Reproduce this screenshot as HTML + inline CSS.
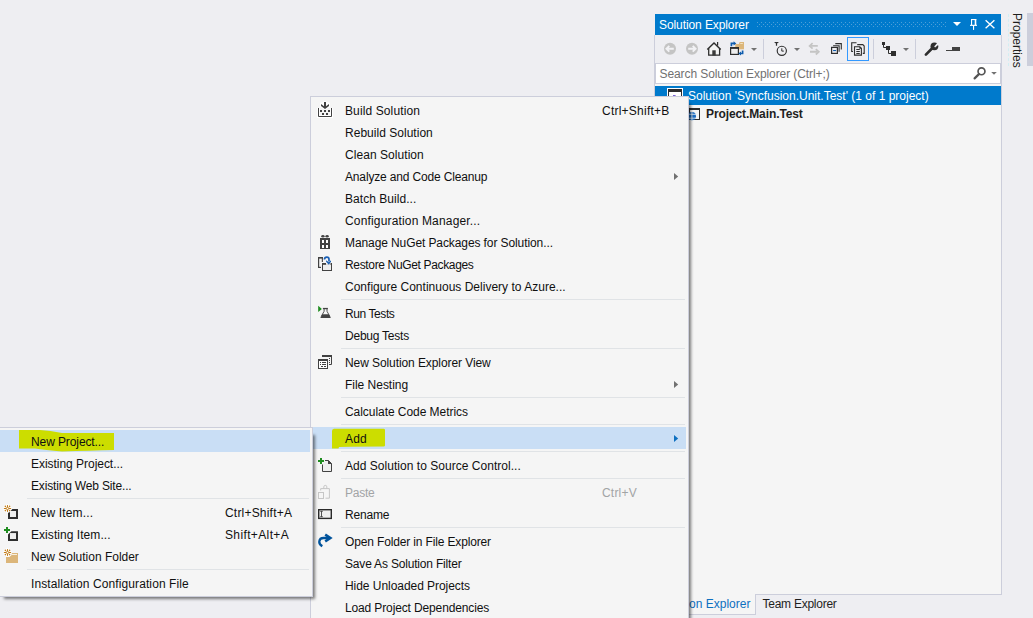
<!DOCTYPE html>
<html><head><meta charset="utf-8"><title>VS</title>
<style>
*{box-sizing:border-box}
html,body{margin:0;padding:0}
body{width:1033px;height:618px;overflow:hidden;position:relative;background:#EEEEF2;font-family:'Liberation Sans', sans-serif;font-size:12px;color:#1E1E1E}
.abs{position:absolute}
.t{position:absolute;white-space:nowrap;line-height:22px;height:22px}
svg{position:absolute;overflow:visible}
</style></head><body>
<div class="abs" style="left:654px;top:35px;width:348px;height:560px;border:1px solid #CCCEDB;border-top:none;border-bottom:none;background:#F5F5F5"></div><div class="abs" style="left:755px;top:594px;width:247px;height:1px;background:#CCCEDB"></div><div class="abs" style="left:655px;top:35px;width:346px;height:28px;background:#EEEEF2"></div><div class="abs" style="left:655px;top:14px;width:346px;height:21px;background:#007ACC"></div><div class="t" style="left:659px;top:14px;color:#FFFFFF;letter-spacing:-0.09px">Solution Explorer</div><svg style="left:0;top:0" width="1033" height="618"><g fill="#4D9FD9"><rect x="757" y="22" width="1" height="1"/><rect x="761" y="22" width="1" height="1"/><rect x="765" y="22" width="1" height="1"/><rect x="769" y="22" width="1" height="1"/><rect x="773" y="22" width="1" height="1"/><rect x="777" y="22" width="1" height="1"/><rect x="781" y="22" width="1" height="1"/><rect x="785" y="22" width="1" height="1"/><rect x="789" y="22" width="1" height="1"/><rect x="793" y="22" width="1" height="1"/><rect x="797" y="22" width="1" height="1"/><rect x="801" y="22" width="1" height="1"/><rect x="805" y="22" width="1" height="1"/><rect x="809" y="22" width="1" height="1"/><rect x="813" y="22" width="1" height="1"/><rect x="817" y="22" width="1" height="1"/><rect x="821" y="22" width="1" height="1"/><rect x="825" y="22" width="1" height="1"/><rect x="829" y="22" width="1" height="1"/><rect x="833" y="22" width="1" height="1"/><rect x="837" y="22" width="1" height="1"/><rect x="841" y="22" width="1" height="1"/><rect x="845" y="22" width="1" height="1"/><rect x="849" y="22" width="1" height="1"/><rect x="853" y="22" width="1" height="1"/><rect x="857" y="22" width="1" height="1"/><rect x="861" y="22" width="1" height="1"/><rect x="865" y="22" width="1" height="1"/><rect x="869" y="22" width="1" height="1"/><rect x="873" y="22" width="1" height="1"/><rect x="877" y="22" width="1" height="1"/><rect x="881" y="22" width="1" height="1"/><rect x="885" y="22" width="1" height="1"/><rect x="889" y="22" width="1" height="1"/><rect x="893" y="22" width="1" height="1"/><rect x="897" y="22" width="1" height="1"/><rect x="901" y="22" width="1" height="1"/><rect x="905" y="22" width="1" height="1"/><rect x="909" y="22" width="1" height="1"/><rect x="913" y="22" width="1" height="1"/><rect x="917" y="22" width="1" height="1"/><rect x="921" y="22" width="1" height="1"/><rect x="925" y="22" width="1" height="1"/><rect x="929" y="22" width="1" height="1"/><rect x="933" y="22" width="1" height="1"/><rect x="937" y="22" width="1" height="1"/><rect x="941" y="22" width="1" height="1"/><rect x="945" y="22" width="1" height="1"/><rect x="759" y="24" width="1" height="1"/><rect x="763" y="24" width="1" height="1"/><rect x="767" y="24" width="1" height="1"/><rect x="771" y="24" width="1" height="1"/><rect x="775" y="24" width="1" height="1"/><rect x="779" y="24" width="1" height="1"/><rect x="783" y="24" width="1" height="1"/><rect x="787" y="24" width="1" height="1"/><rect x="791" y="24" width="1" height="1"/><rect x="795" y="24" width="1" height="1"/><rect x="799" y="24" width="1" height="1"/><rect x="803" y="24" width="1" height="1"/><rect x="807" y="24" width="1" height="1"/><rect x="811" y="24" width="1" height="1"/><rect x="815" y="24" width="1" height="1"/><rect x="819" y="24" width="1" height="1"/><rect x="823" y="24" width="1" height="1"/><rect x="827" y="24" width="1" height="1"/><rect x="831" y="24" width="1" height="1"/><rect x="835" y="24" width="1" height="1"/><rect x="839" y="24" width="1" height="1"/><rect x="843" y="24" width="1" height="1"/><rect x="847" y="24" width="1" height="1"/><rect x="851" y="24" width="1" height="1"/><rect x="855" y="24" width="1" height="1"/><rect x="859" y="24" width="1" height="1"/><rect x="863" y="24" width="1" height="1"/><rect x="867" y="24" width="1" height="1"/><rect x="871" y="24" width="1" height="1"/><rect x="875" y="24" width="1" height="1"/><rect x="879" y="24" width="1" height="1"/><rect x="883" y="24" width="1" height="1"/><rect x="887" y="24" width="1" height="1"/><rect x="891" y="24" width="1" height="1"/><rect x="895" y="24" width="1" height="1"/><rect x="899" y="24" width="1" height="1"/><rect x="903" y="24" width="1" height="1"/><rect x="907" y="24" width="1" height="1"/><rect x="911" y="24" width="1" height="1"/><rect x="915" y="24" width="1" height="1"/><rect x="919" y="24" width="1" height="1"/><rect x="923" y="24" width="1" height="1"/><rect x="927" y="24" width="1" height="1"/><rect x="931" y="24" width="1" height="1"/><rect x="935" y="24" width="1" height="1"/><rect x="939" y="24" width="1" height="1"/><rect x="943" y="24" width="1" height="1"/><rect x="757" y="26" width="1" height="1"/><rect x="761" y="26" width="1" height="1"/><rect x="765" y="26" width="1" height="1"/><rect x="769" y="26" width="1" height="1"/><rect x="773" y="26" width="1" height="1"/><rect x="777" y="26" width="1" height="1"/><rect x="781" y="26" width="1" height="1"/><rect x="785" y="26" width="1" height="1"/><rect x="789" y="26" width="1" height="1"/><rect x="793" y="26" width="1" height="1"/><rect x="797" y="26" width="1" height="1"/><rect x="801" y="26" width="1" height="1"/><rect x="805" y="26" width="1" height="1"/><rect x="809" y="26" width="1" height="1"/><rect x="813" y="26" width="1" height="1"/><rect x="817" y="26" width="1" height="1"/><rect x="821" y="26" width="1" height="1"/><rect x="825" y="26" width="1" height="1"/><rect x="829" y="26" width="1" height="1"/><rect x="833" y="26" width="1" height="1"/><rect x="837" y="26" width="1" height="1"/><rect x="841" y="26" width="1" height="1"/><rect x="845" y="26" width="1" height="1"/><rect x="849" y="26" width="1" height="1"/><rect x="853" y="26" width="1" height="1"/><rect x="857" y="26" width="1" height="1"/><rect x="861" y="26" width="1" height="1"/><rect x="865" y="26" width="1" height="1"/><rect x="869" y="26" width="1" height="1"/><rect x="873" y="26" width="1" height="1"/><rect x="877" y="26" width="1" height="1"/><rect x="881" y="26" width="1" height="1"/><rect x="885" y="26" width="1" height="1"/><rect x="889" y="26" width="1" height="1"/><rect x="893" y="26" width="1" height="1"/><rect x="897" y="26" width="1" height="1"/><rect x="901" y="26" width="1" height="1"/><rect x="905" y="26" width="1" height="1"/><rect x="909" y="26" width="1" height="1"/><rect x="913" y="26" width="1" height="1"/><rect x="917" y="26" width="1" height="1"/><rect x="921" y="26" width="1" height="1"/><rect x="925" y="26" width="1" height="1"/><rect x="929" y="26" width="1" height="1"/><rect x="933" y="26" width="1" height="1"/><rect x="937" y="26" width="1" height="1"/><rect x="941" y="26" width="1" height="1"/><rect x="945" y="26" width="1" height="1"/></g></svg><svg style="left:0;top:0" width="1033" height="618"><path d="M953 22 L961 22 L957 26 Z" fill="#FFFFFF"/><rect x="971" y="19" width="1.1" height="6" fill="#FFFFFF"/><rect x="974.7" y="19" width="1.6" height="6" fill="#FFFFFF"/><rect x="971" y="19" width="5.3" height="1.1" fill="#FFFFFF"/><rect x="970" y="24.8" width="7" height="1.1" fill="#FFFFFF"/><rect x="973" y="25.5" width="1.1" height="4.4" fill="#FFFFFF"/><path d="M985.6 20.2 L994.4 28.3 M994.4 20.2 L985.6 28.3" stroke="#FFFFFF" stroke-width="1.35"/></svg><svg style="left:0;top:0" width="1033" height="618"><circle cx="670" cy="48.8" r="6" fill="#C4C4C4"/><path d="M666.3 48.8 H673.8 M669.3 45.9 L666.4 48.8 L669.3 51.7" stroke="#F2F2F5" stroke-width="1.9" fill="none"/><circle cx="692" cy="48.8" r="6" fill="#C4C4C4"/><path d="M688.2 48.8 H695.7 M692.7 45.9 L695.6 48.8 L692.7 51.7" stroke="#F2F2F5" stroke-width="1.9" fill="none"/><path d="M708.6 49 L714 43.6 L719.6 49 V55 H708.6 Z" fill="#F5F5F5"/><path d="M707.3 49.6 L714 42.9 L720.7 49.6" stroke="#2E2E2E" stroke-width="1.4" fill="none"/><path d="M708.7 48.2 V55.1 H719.6 V48.2" stroke="#2E2E2E" stroke-width="1.3" fill="none"/><rect x="717" y="42" width="1.2" height="3.6" fill="#2E2E2E"/><rect x="712.3" y="50.3" width="3.4" height="5.3" fill="#3A3A3A"/><path d="M735.3 44.1 H739 L739.6 42 H744 V49.6 H735.3 Z" fill="#DCB67A"/><rect x="740.2" y="43" width="2.6" height="1" fill="#F3E3C3"/><rect x="730" y="47" width="9" height="8" fill="#2E2E2E"/><rect x="731.2" y="48.9" width="6.6" height="4.9" fill="#EEEEEE"/><path d="M731.4 46.3 V43.4 H734" stroke="#0E5CAD" stroke-width="1.7" fill="none"/><path d="M733.6 41.3 L736.3 43.4 L733.6 45.5 Z" fill="#0E5CAD"/><rect x="739" y="49.6" width="5.5" height="6" fill="#EEEEF2"/><path d="M742.6 50.6 V53.5 H740.4" stroke="#0E5CAD" stroke-width="1.7" fill="none"/><path d="M741 51.4 L738.3 53.5 L741 55.6 Z" fill="#0E5CAD"/><path d="M751 48 h6 l-3 3 z" fill="#717171"/><rect x="763" y="39" width="1" height="20" fill="#CCCEDB"/><circle cx="781.8" cy="50.8" r="4.6" fill="none" stroke="#2E2E2E" stroke-width="1.15"/><path d="M781.8 48.3 V51.1 H783.8" stroke="#2E2E2E" stroke-width="1" fill="none"/><path d="M774 42 H779 L777.1 43.4 V45.8 H775.9 V43.4 Z" fill="#2E2E2E"/><path d="M794 48 h6 l-3 3 z" fill="#717171"/><path d="M810.5 45.9 H817.8 M810 51.8 H817.5" stroke="#C4C4C4" stroke-width="1.9" fill="none"/><path d="M812.6 43.2 L809.6 45.9 L812.6 48.6 M815.8 49.1 L818.8 51.8 L815.8 54.5" stroke="#C4C4C4" stroke-width="1.7" fill="none"/><path d="M835.3 43.6 H841.3 V49.6" stroke="#2E2E2E" stroke-width="1.1" fill="none"/><path d="M833.1 45.8 H839.1 V51.8" stroke="#2E2E2E" stroke-width="1.1" fill="none"/><rect x="831.6" y="47.4" width="5.8" height="6" fill="#EEEEF2" stroke="#2E2E2E" stroke-width="1.2"/><rect x="833.1" y="50" width="3" height="1.1" fill="#0E5CAD"/><rect x="847.5" y="37.5" width="21" height="23" fill="#EEEEF2" stroke="#3399FF"/><path d="M856.5 42.7 H851.7 V51.5 H853" stroke="#2E2E2E" stroke-width="1.1" fill="none"/><path d="M857.2 44.6 H862.8 L864.2 46 V53.4 H862.8" stroke="#2E2E2E" stroke-width="1.1" fill="none"/><path d="M854.5 46.7 H859.8 L861.4 48.3 V55.1 H854.5 Z" fill="#EEEEF2" stroke="#2E2E2E" stroke-width="1.1"/><path d="M859.3 46.5 L861.6 48.8 H859.3 Z" fill="#2E2E2E"/><g fill="#2E2E2E"><rect x="856.3" y="49" width="3.5" height="1"/><rect x="856.3" y="51" width="3.5" height="1"/><rect x="856.3" y="53" width="3.5" height="1"/></g><rect x="873" y="39" width="1" height="20" fill="#CCCEDB"/><rect x="882" y="42" width="3" height="3" fill="#2E2E2E"/><rect x="886" y="46" width="4" height="4" fill="#2E2E2E"/><rect x="891" y="51" width="5" height="5" fill="#2E2E2E"/><path d="M883.5 45 V47.5 H886 M888.5 50 V53.5 H891" stroke="#2E2E2E" stroke-width="1" fill="none"/><path d="M903 48 h6 l-3 3 z" fill="#717171"/><rect x="915" y="39" width="1" height="20" fill="#CCCEDB"/><path d="M925.9 54.6 L932.2 48.3" stroke="#2E2E2E" stroke-width="2.7" stroke-linecap="round"/><circle cx="934.4" cy="46.3" r="3.9" fill="#2E2E2E"/><path d="M934.2 46.6 L937.6 42.4 L939.3 44.1 L935.1 47.5 Z" fill="#EEEEF2"/><rect x="946" y="50" width="9" height="1" fill="#424242"/><rect x="952" y="47" width="8" height="4" fill="#424242"/></svg><div class="abs" style="left:655px;top:63px;width:346px;height:21px;background:#FFFFFF;border:1px solid #CCCEDB"></div><div class="t" style="left:659.5px;top:63px;color:#717171;letter-spacing:-0.09px">Search Solution Explorer (Ctrl+;)</div><svg style="left:0;top:0" width="1033" height="618"><circle cx="981.5" cy="71.3" r="3.45" fill="none" stroke="#555555" stroke-width="1.7"/><path d="M978.9 74.1 L974.6 78.4" stroke="#555555" stroke-width="2.2" stroke-linecap="round"/><path d="M991.2 72 h5.6 l-2.8 2.7 z" fill="#717171"/></svg><div class="abs" style="left:655px;top:86px;width:346px;height:19px;background:#007ACC"></div><svg style="left:0;top:0" width="1033" height="618"><rect x="667" y="88" width="16" height="16" fill="#FFFFFF"/><rect x="668.5" y="89.5" width="13" height="13" fill="#FFFFFF" stroke="#2E2E2E"/><rect x="668" y="89" width="14" height="3" fill="#2E2E2E"/><rect x="673" y="95" width="2.6" height="1.2" fill="#7A62D6"/></svg><div class="t" style="left:688px;top:86px;color:#FFFFFF;line-height:20px">Solution 'Syncfusion.Unit.Test' (1 of 1 project)</div><svg style="left:0;top:0" width="1033" height="618"><rect x="689.5" y="108.5" width="10" height="11" fill="#F5F5F5" stroke="#2E2E2E"/><rect x="689" y="108" width="11" height="2" fill="#2E2E2E"/><circle cx="691.9" cy="116.2" r="4.1" fill="#1A6BC1"/><path d="M688 114.3 h8 M688 118.2 h8 M691.9 112 v8.4" stroke="#F5F5F5" stroke-width="0.8"/></svg><div class="t" style="left:706px;top:104px;font-weight:bold;line-height:20px;letter-spacing:-0.1px">Project.Main.Test</div><div class="abs" style="left:654px;top:594px;width:102px;height:21px;background:#F5F5F5;border:1px solid #CCCEDB;border-top:none"></div><div class="t" style="left:659px;top:593px;color:#0E70C0">Solution Explorer</div><div class="t" style="left:762.5px;top:593px;letter-spacing:-0.25px">Team Explorer</div><div class="abs" style="left:1027px;top:13px;width:6px;height:53px;background:#CCCEDB"></div><div class="abs" style="left:1008px;top:14px;width:1px;height:52px;border-left:1px dashed #D2EEF3"></div><div class="t" style="left:989.5px;top:29px;transform:rotate(90deg);transform-origin:center;width:54px;text-align:left">Properties</div><div class="abs" style="left:316px;top:104px;width:375px;height:540px;background:rgba(0,0,0,0.5);filter:blur(1.5px)"></div><div class="abs" style="left:310px;top:96px;width:379px;height:540px;background:#F5F5F5;border:1px solid #CCCEDB"></div><div class="t" style="left:345px;top:100px;color:#101010;letter-spacing:0.115px;">Build Solution</div><div class="t" style="left:602px;top:100px;color:#101010;letter-spacing:0.236px;">Ctrl+Shift+B</div><div class="t" style="left:345px;top:122px;color:#101010;letter-spacing:0.027px;">Rebuild Solution</div><div class="t" style="left:345px;top:144px;color:#101010;letter-spacing:0.054px;">Clean Solution</div><div class="t" style="left:345px;top:166px;color:#101010;letter-spacing:-0.157px;">Analyze and Code Cleanup</div><div class="t" style="left:345px;top:188px;color:#101010;letter-spacing:0.046px;">Batch Build...</div><div class="t" style="left:345px;top:210px;color:#101010;letter-spacing:0.161px;">Configuration Manager...</div><div class="t" style="left:345px;top:232px;color:#101010;letter-spacing:-0.097px;">Manage NuGet Packages for Solution...</div><div class="t" style="left:345px;top:254px;color:#101010;letter-spacing:-0.343px;">Restore NuGet Packages</div><div class="t" style="left:345px;top:276px;color:#101010;letter-spacing:0.013px;">Configure Continuous Delivery to Azure...</div><div class="abs" style="left:341px;top:299px;width:344px;height:1px;background:#E0E3E6"></div><div class="t" style="left:345px;top:303px;color:#101010;letter-spacing:-0.413px;">Run Tests</div><div class="t" style="left:345px;top:325px;color:#101010;letter-spacing:-0.230px;">Debug Tests</div><div class="abs" style="left:341px;top:348px;width:344px;height:1px;background:#E0E3E6"></div><div class="t" style="left:345px;top:352px;color:#101010;letter-spacing:-0.084px;">New Solution Explorer View</div><div class="t" style="left:345px;top:374px;color:#101010;letter-spacing:-0.018px;">File Nesting</div><div class="abs" style="left:341px;top:397px;width:344px;height:1px;background:#E0E3E6"></div><div class="t" style="left:345px;top:401px;color:#101010;letter-spacing:-0.052px;">Calculate Code Metrics</div><div class="abs" style="left:341px;top:424px;width:344px;height:1px;background:#E0E3E6"></div><div class="abs" style="left:311px;top:427px;width:375px;height:22px;background:#C9DEF5"></div><svg style="left:0;top:0" width="1033" height="618"><path d="M334 428.8 Q345 428.6 360 428.7 H383.6 Q385 428.7 385 430 V445.5 Q385 446.6 383.6 446.6 Q350 446.6 339 447 L338.5 448.5 H332 V431 Q332 429 334 428.8 Z" fill="#CCDD00"/></svg><div class="t" style="left:345px;top:428px;color:#101010;letter-spacing:0.150px;">Add</div><div class="abs" style="left:341px;top:451px;width:344px;height:1px;background:#E0E3E6"></div><div class="t" style="left:345px;top:455px;color:#101010;letter-spacing:0.031px;">Add Solution to Source Control...</div><div class="abs" style="left:341px;top:478px;width:344px;height:1px;background:#E0E3E6"></div><div class="t" style="left:345px;top:482px;color:#A2A4A5;letter-spacing:-0.250px;">Paste</div><div class="t" style="left:602px;top:482px;color:#A2A4A5;letter-spacing:0.200px;">Ctrl+V</div><div class="t" style="left:345px;top:504px;color:#101010;letter-spacing:-0.200px;">Rename</div><div class="abs" style="left:341px;top:527px;width:344px;height:1px;background:#E0E3E6"></div><div class="t" style="left:345px;top:531px;color:#101010;letter-spacing:-0.148px;">Open Folder in File Explorer</div><div class="t" style="left:345px;top:553px;color:#101010;letter-spacing:-0.182px;">Save As Solution Filter</div><div class="t" style="left:345px;top:575px;color:#101010;letter-spacing:-0.048px;">Hide Unloaded Projects</div><div class="t" style="left:345px;top:597px;color:#101010;letter-spacing:-0.133px;">Load Project Dependencies</div><svg style="left:0;top:0" width="1033" height="618"><path d="M318.5 108 V116.5 H331.5 V108" stroke="#FFFFFF" stroke-width="3" fill="none"/><path d="M320 103 L325 101 L330 103 L330 107 L325 110 L320 107 Z" fill="#FFFFFF"/><path d="M318.5 108 V116.5 H331.5 V108" stroke="#424242" stroke-width="1" fill="none"/><rect x="324" y="102" width="2" height="5" fill="#424242"/><path d="M321 104 L325 107 L329 104 L329 106 L325 109 L321 106 Z" fill="#424242"/><g fill="#424242"><rect x="320" y="110" width="2" height="2"/><rect x="324" y="110" width="2" height="2"/><rect x="328" y="110" width="2" height="2"/><rect x="322" y="113" width="2" height="2"/><rect x="326" y="113" width="2" height="2"/></g><path d="M674 173 L678.2 176.5 L674 180 Z" fill="#717171"/><rect x="320" y="238" width="10" height="11" fill="#424242"/><g fill="#FFFFFF"><rect x="322" y="240" width="2" height="3"/><rect x="326" y="240" width="2" height="3"/><rect x="322" y="245" width="2" height="3"/><rect x="326" y="245" width="2" height="3"/></g><ellipse cx="322.9" cy="236.2" rx="1.7" ry="1.3" fill="#424242"/><ellipse cx="327.1" cy="236.2" rx="1.7" ry="1.3" fill="#424242"/><g fill="#424242"><rect x="318" y="257" width="5" height="1.6"/><rect x="318" y="257" width="1.2" height="11"/><rect x="321.8" y="257" width="1.1" height="5"/><rect x="318" y="266.8" width="3" height="1.2"/></g><rect x="322" y="263" width="10" height="8" fill="#424242"/><rect x="323" y="264.8" width="8" height="5.2" fill="#EEEEEE"/><rect x="326" y="262.5" width="4.5" height="2.3" fill="#F5F5F5"/><path d="M324.4 259.5 Q324.6 257.2 326.8 257.2 Q329 257.2 329 259.5 V261.5" stroke="#1A5FB4" stroke-width="1.7" fill="none"/><path d="M326.1 260.2 L328.9 262.3 L331 260.2 L331 261.8 L328.8 264.8 L326.1 261.8 Z" fill="#1A5FB4"/><path d="M318.2 305.8 L321.9 309 L318.2 312 Z" fill="#1E8C1E"/><rect x="322.9" y="307.9" width="5" height="1.3" fill="#424242"/><path d="M324.1 309 V311.3 L321.2 316.5 M327 309 V311.3 L329.9 316.5" stroke="#424242" stroke-width="0.9" fill="none"/><path d="M322.3 314.2 H328.8 L330.9 317.9 H320.3 Z" fill="#424242"/><path d="M322.5 357 V355.5 H331.5 V364.5 H329" stroke="#424242" stroke-width="1" fill="none"/><rect x="322" y="355" width="10" height="2" fill="#424242"/><g fill="#424242"><rect x="329" y="358" width="1" height="1"/><rect x="329" y="360" width="1" height="1"/><rect x="329" y="362" width="1" height="1"/></g><rect x="318.5" y="359.5" width="9" height="9" fill="#FFFFFF" stroke="#424242" stroke-width="1"/><rect x="318" y="359" width="10" height="2" fill="#424242"/><g fill="#424242"><rect x="320" y="362" width="1" height="1"/><rect x="322" y="362" width="4" height="1"/><rect x="320" y="364" width="1" height="1"/><rect x="322" y="364" width="4" height="1"/><rect x="321" y="366" width="2" height="1"/><rect x="324" y="366" width="2" height="1"/></g><path d="M674 381 L678.2 384.5 L674 388 Z" fill="#717171"/><path d="M674 435 L678.2 438.5 L674 442 Z" fill="#0E70C0"/><path d="M322.5 464.5 V471.5 H331.5 V463.5 L328.5 460.5 H325" stroke="#424242" stroke-width="1" fill="#EEEEEE"/><path d="M328 460 L332 464 H328 Z" fill="#424242"/><g fill="#1E8C1E"><rect x="318" y="460" width="6" height="2"/><rect x="320" y="458" width="2" height="6"/></g><path d="M320.7 490.5 V488.6 H329.4 V498.2 H325.5" stroke="#C6C6C6" stroke-width="1" fill="none"/><path d="M323.8 488.5 V486.8 Q323.8 485.4 325.3 485.4 Q326.8 485.4 326.8 486.8 V488.5" stroke="#C6C6C6" stroke-width="1" fill="none"/><rect x="318.5" y="492.5" width="5" height="6" fill="none" stroke="#C6C6C6" stroke-width="1"/><rect x="318.7" y="509.7" width="12.6" height="8.7" fill="#EEEEEE" stroke="#2A2A2A" stroke-width="1.4"/><path d="M320.2 511.3 H322.8 M320.2 516.7 H322.8 M321.5 511.3 V516.7" stroke="#2A2A2A" stroke-width="0.8"/><path d="M322.3 546.2 Q318.9 544 319.3 541.3 Q319.8 538 323.5 538 H329" stroke="#00539C" stroke-width="2.3" fill="none"/><path d="M325.2 534.6 L330.4 538 L325.2 541.4" stroke="#00539C" stroke-width="2.5" fill="none" stroke-linejoin="miter"/></svg><div class="abs" style="left:4px;top:435px;width:311px;height:164px;background:rgba(0,0,0,0.5);filter:blur(1.5px)"></div><div class="abs" style="left:-1px;top:427px;width:314px;height:170px;background:#F5F5F5;border:1px solid #CCCEDB"></div><div class="abs" style="left:0px;top:430px;width:310px;height:22px;background:#C9DEF5"></div><svg style="left:0;top:0" width="1033" height="618"><path d="M19 430 H40 Q50 430.5 62 433 H114 V450 Q90 450.5 62 451.5 Q45 450 35 448.5 H19 Z" fill="#CCDD00"/></svg><div class="t" style="left:31px;top:431px;color:#101010;letter-spacing:-0.100px;">New Project...</div><div class="t" style="left:31px;top:453px;color:#101010;letter-spacing:-0.033px;">Existing Project...</div><div class="t" style="left:31px;top:475px;color:#101010;letter-spacing:-0.168px;">Existing Web Site...</div><div class="abs" style="left:27px;top:498px;width:282px;height:1px;background:#E0E3E6"></div><div class="t" style="left:31px;top:502px;color:#101010;letter-spacing:0.130px;">New Item...</div><div class="t" style="left:225px;top:502px;color:#101010;letter-spacing:0.200px;">Ctrl+Shift+A</div><div class="t" style="left:31px;top:524px;color:#101010;letter-spacing:0.053px;">Existing Item...</div><div class="t" style="left:225px;top:524px;color:#101010;letter-spacing:0.370px;">Shift+Alt+A</div><div class="t" style="left:31px;top:546px;color:#101010;letter-spacing:-0.011px;">New Solution Folder</div><div class="abs" style="left:27px;top:569px;width:282px;height:1px;background:#E0E3E6"></div><div class="t" style="left:31px;top:573px;color:#101010;letter-spacing:0.100px;">Installation Configuration File</div><svg style="left:0;top:0" width="1033" height="618"><path d="M12.4 509 H18 V519 H8 V512.8 Z M10 511 V517 H16 V511 Z" fill="#2E2E2E" fill-rule="evenodd"/><rect x="10" y="511" width="6" height="6" fill="#EEEEEE"/><circle cx="7.5" cy="508.5" r="4.2" fill="#FFFFFF" opacity="0.85"/><path d="M7.5 505.1 V511.9 M3.9 508.5 H11.1" stroke="#C27D1A" stroke-width="1"/><g fill="#C27D1A"><circle cx="5.4" cy="506.4" r="0.8"/><circle cx="9.6" cy="506.4" r="0.8"/><circle cx="5.4" cy="510.6" r="0.8"/><circle cx="9.6" cy="510.6" r="0.8"/></g><circle cx="7.5" cy="508.5" r="1.2" fill="#FFFFFF" stroke="#C27D1A" stroke-width="0.9"/><path d="M11.4 531.3 H18 V541 H8 V534.4 Z M10 533.3 V539 H16 V533.3 Z" fill="#2E2E2E" fill-rule="evenodd"/><rect x="10" y="533.3" width="6" height="5.7" fill="#EEEEEE"/><g fill="#1E8C1E"><rect x="4" y="529" width="6" height="2"/><rect x="6" y="527" width="2" height="6"/></g><path d="M6 557 H9.4 L11.7 555 V553 H18 V563 H6 Z" fill="#DCB67A"/><rect x="12" y="554" width="5" height="1" fill="#F8F0E0"/><circle cx="7.5" cy="552.5" r="4.2" fill="#FFFFFF" opacity="0.85"/><path d="M7.5 549.1 V555.9 M3.9 552.5 H11.1" stroke="#C27D1A" stroke-width="1"/><g fill="#C27D1A"><circle cx="5.4" cy="550.4" r="0.8"/><circle cx="9.6" cy="550.4" r="0.8"/><circle cx="5.4" cy="554.6" r="0.8"/><circle cx="9.6" cy="554.6" r="0.8"/></g><circle cx="7.5" cy="552.5" r="1.2" fill="#FFFFFF" stroke="#C27D1A" stroke-width="0.9"/></svg></body></html>
